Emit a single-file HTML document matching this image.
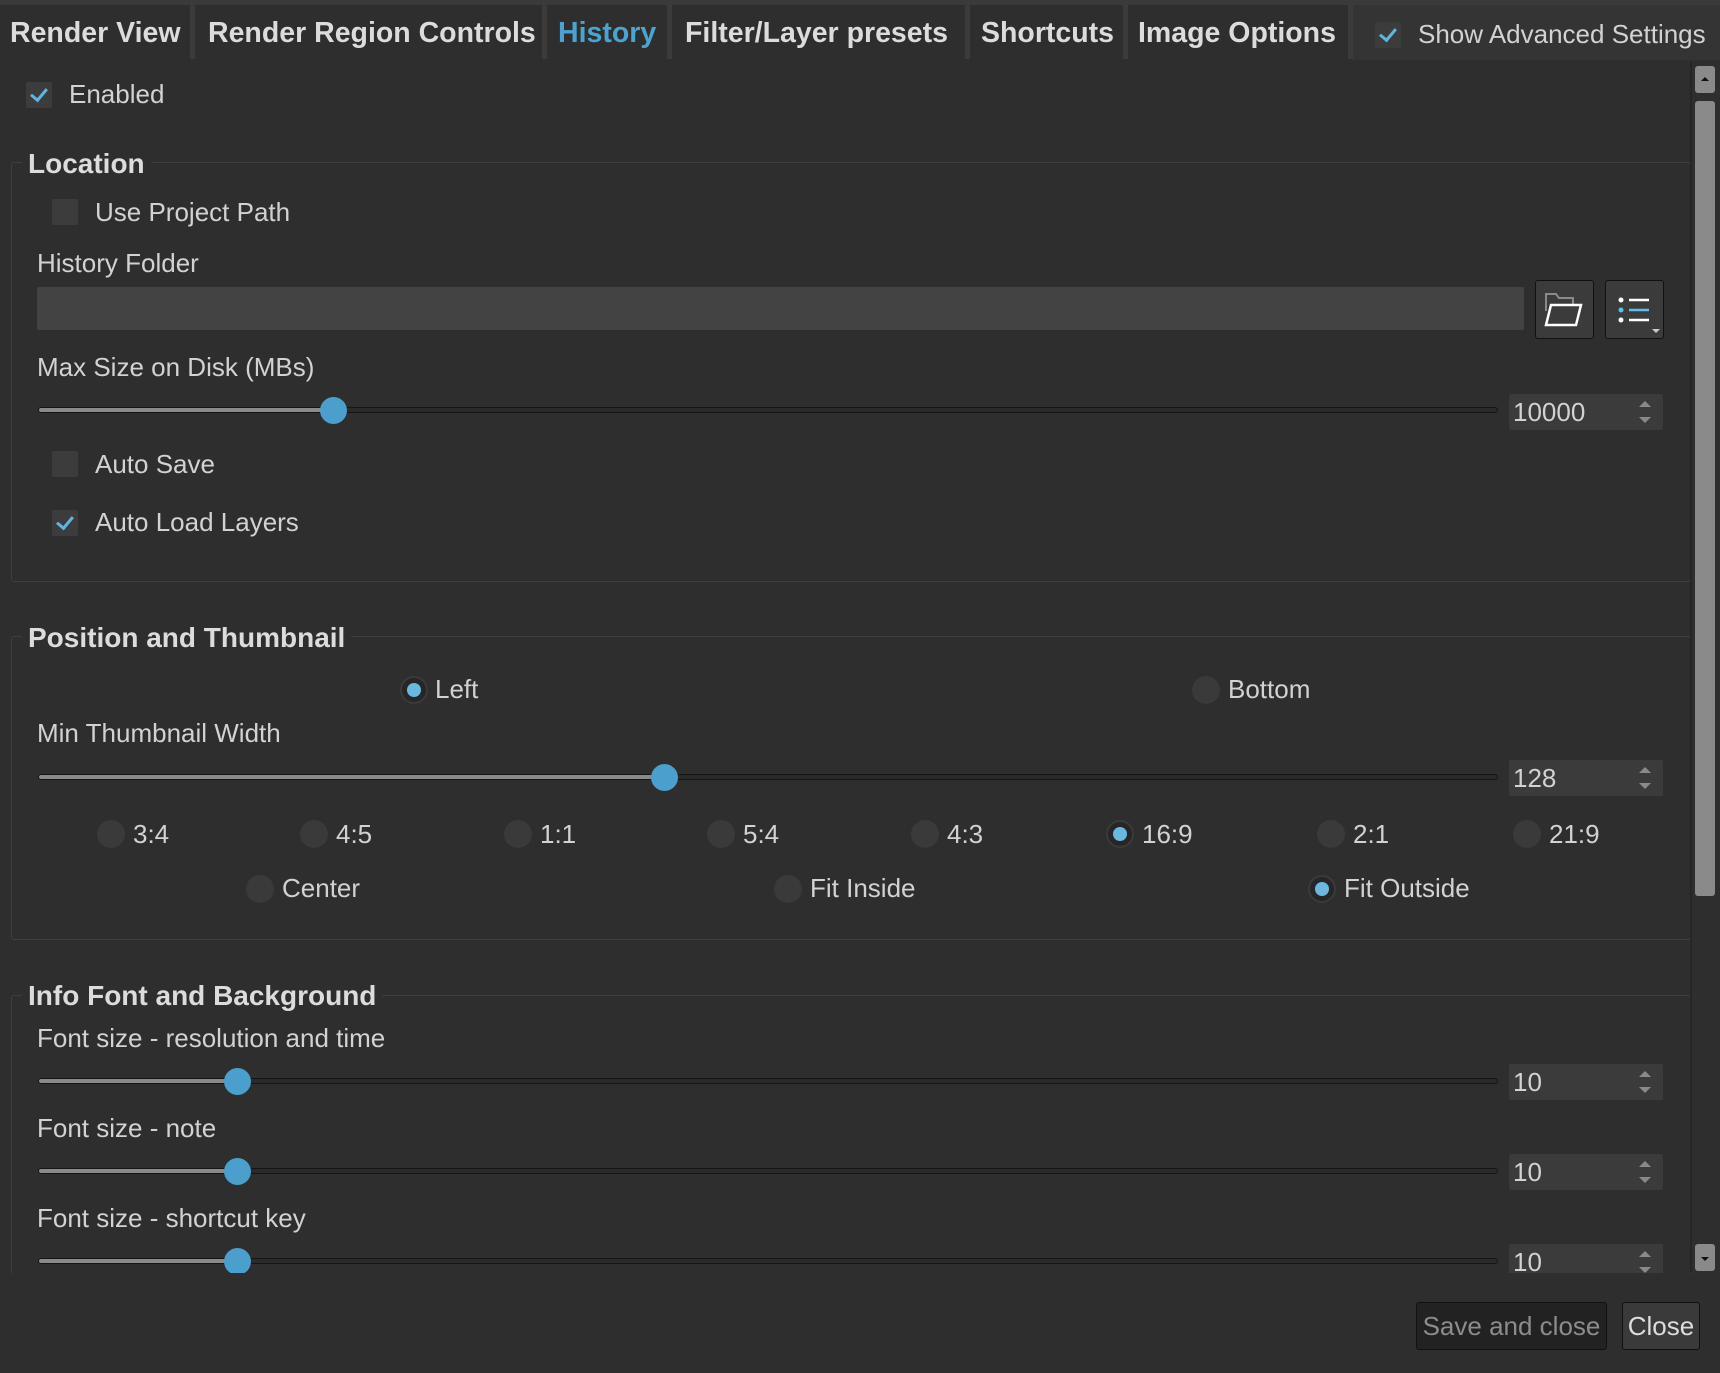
<!DOCTYPE html>
<html style="overflow:hidden;height:1373px"><head><style>
*{margin:0;padding:0;box-sizing:border-box}
body{width:1720px;height:1373px;background:#2e2e2e;font-family:"Liberation Sans",sans-serif;color:#d4d4d4;position:relative;overflow:hidden;font-size:26px}
.a{position:absolute;white-space:nowrap}
.tab{position:absolute;top:5px;height:55px;font-weight:bold;font-size:28.5px;color:#dcdcdc;line-height:56px;white-space:nowrap}
.sep{position:absolute;top:5px;height:54px;width:5px;background:#3b3b3b}
.cb{position:absolute;width:26px;height:26px;background:#3c3c3c;border-radius:2px}
.cb.on::after{content:"";position:absolute;left:8px;top:3px;width:7px;height:13px;border:solid #5fb4e0;border-width:0 3px 3px 0;transform:rotate(40deg)}
.grp{position:absolute;border:1px solid #3f3f3f;border-radius:3px;left:11px;width:1680px}
.gt{position:absolute;font-weight:bold;font-size:28px;color:#dcdcdc;background:#2e2e2e;padding:0 6px 0 6px;white-space:nowrap}
.lbl{position:absolute;font-size:26px;color:#d2d2d2;white-space:nowrap}
.trk{position:absolute;left:38px;width:1460px;height:6px;border:1px solid #151515;border-radius:3px;background:#2a2a2a}
.fill{position:absolute;left:0;top:0;height:4px;background:#8a8a8a;border-radius:2px}
.hd{position:absolute;width:27px;height:27px;border-radius:50%;background:#4a9fcc}
.sp{position:absolute;left:1509px;width:154px;height:36px;background:#3b3b3b;border-radius:2px;font-size:26px;color:#d2d2d2;padding-left:4px;line-height:36px}
.sp::before{content:"";position:absolute;right:12px;top:7px;border:6px solid transparent;border-bottom:6px solid #8a8a8a;border-top:none}
.sp::after{content:"";position:absolute;right:12px;bottom:7px;border:6px solid transparent;border-top:6px solid #8a8a8a;border-bottom:none}
.rd{position:absolute;width:28px;height:28px;border-radius:50%;background:#3a3a3a}
.rd.on{background:#262626;border:2px solid #3a3a3a}
.rd.on::after{content:"";position:absolute;left:5px;top:5px;width:14px;height:14px;border-radius:50%;background:#6ab8e0}
</style></head><body>
<div class="a" style="left:0;top:0;width:1720px;height:5px;background:#3a3a3a"></div>
<div class="a" style="left:1352px;top:5px;width:368px;height:55px;background:#343434"></div>
<div class="tab" style="left:10px">Render View</div>
<div class="sep" style="left:190px"></div>
<div class="tab" style="left:208px">Render Region Controls</div>
<div class="sep" style="left:542px"></div>
<div class="tab" style="left:558px;color:#4aa3d0">History</div>
<div class="sep" style="left:667px"></div>
<div class="tab" style="left:685px">Filter/Layer presets</div>
<div class="sep" style="left:965px"></div>
<div class="tab" style="left:981px">Shortcuts</div>
<div class="sep" style="left:1123px"></div>
<div class="tab" style="left:1138px">Image Options</div>
<div class="sep" style="left:1348px"></div>
<div class="cb on" style="left:1375px;top:22px"></div>
<div class="lbl" style="left:1418px;top:19px">Show Advanced Settings</div>

<div class="cb on" style="left:26px;top:82px"></div>
<div class="lbl" style="left:69px;top:79px">Enabled</div>

<div class="grp" style="top:162px;height:420px"></div>
<div class="gt" style="left:22px;top:148px">Location</div>
<div class="cb" style="left:52px;top:199px"></div>
<div class="lbl" style="left:95px;top:197px">Use Project Path</div>
<div class="lbl" style="left:37px;top:248px">History Folder</div>
<div class="a" style="left:37px;top:287px;width:1487px;height:43px;background:#434343;border-radius:2px"></div>
<div class="a" style="left:1535px;top:280px;width:59px;height:59px;background:#3b3b3b;border:1px solid #111;border-radius:3px">
<svg width="57" height="57" viewBox="0 0 57 57"><path d="M10 30V13h10l3 4h14v6" fill="none" stroke="#8a8a8a" stroke-width="2"/><path d="M10 44l5-20h30l-5 20z" fill="none" stroke="#fff" stroke-width="2.5"/></svg></div>
<div class="a" style="left:1605px;top:280px;width:59px;height:59px;background:#3b3b3b;border:1px solid #111;border-radius:3px">
<svg width="57" height="57" viewBox="0 0 57 57"><circle cx="15" cy="19" r="2.5" fill="#fff"/><circle cx="15" cy="29" r="2.5" fill="#5cc0f0"/><circle cx="15" cy="39" r="2.5" fill="#fff"/><path d="M23 19h20M23 39h20" stroke="#fff" stroke-width="2.5"/><path d="M23 29h20" stroke="#5cc0f0" stroke-width="2.5"/><path d="M46 48h8l-4 4z" fill="#ccc"/></svg></div>
<div class="lbl" style="left:37px;top:352px">Max Size on Disk (MBs)</div>
<div class="trk" style="top:407px"><div class="fill" style="width:296px"></div></div>
<div class="hd" style="left:320px;top:397px"></div>
<div class="sp" style="top:394px">10000</div>
<div class="cb" style="left:52px;top:451px"></div>
<div class="lbl" style="left:95px;top:449px">Auto Save</div>
<div class="cb on" style="left:52px;top:510px"></div>
<div class="lbl" style="left:95px;top:507px">Auto Load Layers</div>

<div class="grp" style="top:636px;height:304px"></div>
<div class="gt" style="left:22px;top:622px">Position and Thumbnail</div>
<div class="rd on" style="left:400px;top:676px"></div>
<div class="lbl" style="left:435px;top:674px">Left</div>
<div class="rd" style="left:1192px;top:676px"></div>
<div class="lbl" style="left:1228px;top:674px">Bottom</div>
<div class="lbl" style="left:37px;top:718px">Min Thumbnail Width</div>
<div class="trk" style="top:774px"><div class="fill" style="width:628px"></div></div>
<div class="hd" style="left:651px;top:764px"></div>
<div class="sp" style="top:760px">128</div>
<div class="rd" style="left:97px;top:820px"></div><div class="lbl" style="left:133px;top:819px">3:4</div>
<div class="rd" style="left:300px;top:820px"></div><div class="lbl" style="left:336px;top:819px">4:5</div>
<div class="rd" style="left:504px;top:820px"></div><div class="lbl" style="left:540px;top:819px">1:1</div>
<div class="rd" style="left:707px;top:820px"></div><div class="lbl" style="left:743px;top:819px">5:4</div>
<div class="rd" style="left:911px;top:820px"></div><div class="lbl" style="left:947px;top:819px">4:3</div>
<div class="rd on" style="left:1106px;top:820px"></div><div class="lbl" style="left:1142px;top:819px">16:9</div>
<div class="rd" style="left:1317px;top:820px"></div><div class="lbl" style="left:1353px;top:819px">2:1</div>
<div class="rd" style="left:1513px;top:820px"></div><div class="lbl" style="left:1549px;top:819px">21:9</div>
<div class="rd" style="left:246px;top:875px"></div><div class="lbl" style="left:282px;top:873px">Center</div>
<div class="rd" style="left:774px;top:875px"></div><div class="lbl" style="left:810px;top:873px">Fit Inside</div>
<div class="rd on" style="left:1308px;top:875px"></div><div class="lbl" style="left:1344px;top:873px">Fit Outside</div>

<div class="grp" style="top:995px;height:300px"></div>
<div class="gt" style="left:22px;top:980px">Info Font and Background</div>
<div class="lbl" style="left:37px;top:1023px">Font size - resolution and time</div>
<div class="trk" style="top:1078px"><div class="fill" style="width:200px"></div></div>
<div class="hd" style="left:224px;top:1068px"></div>
<div class="sp" style="top:1064px">10</div>
<div class="lbl" style="left:37px;top:1113px">Font size - note</div>
<div class="trk" style="top:1168px"><div class="fill" style="width:200px"></div></div>
<div class="hd" style="left:224px;top:1158px"></div>
<div class="sp" style="top:1154px">10</div>
<div class="lbl" style="left:37px;top:1203px">Font size - shortcut key</div>
<div class="trk" style="top:1258px"><div class="fill" style="width:200px"></div></div>
<div class="hd" style="left:224px;top:1248px"></div>
<div class="sp" style="top:1244px">10</div>

<div class="a" style="left:0;top:1273px;width:1720px;height:100px;background:#2e2e2e"></div>
<div class="a" style="left:1690px;top:62px;width:2px;height:1210px;background:#262626"></div>
<div class="a" style="left:1695px;top:66px;width:20px;height:27px;background:#8a8a8a;border-radius:3px"></div>
<div class="a" style="left:1701px;top:77px;border:4px solid transparent;border-bottom:4px solid #111;border-top:none"></div>
<div class="a" style="left:1695px;top:101px;width:20px;height:795px;background:#8a8a8a;border-radius:3px"></div>
<div class="a" style="left:1695px;top:1244px;width:20px;height:27px;background:#8a8a8a;border-radius:3px"></div>
<div class="a" style="left:1701px;top:1257px;border:4px solid transparent;border-top:4px solid #111;border-bottom:none"></div>

<div class="a" style="left:1416px;top:1302px;width:191px;height:48px;background:#222;border:1px solid #111;border-radius:3px;color:#8c8c8c;font-size:26px;text-align:center;line-height:46px">Save and close</div>
<div class="a" style="left:1622px;top:1302px;width:78px;height:48px;background:#3a3a3a;border:1px solid #111;border-radius:3px;color:#dcdcdc;font-size:26px;text-align:center;line-height:46px">Close</div>
</body></html>
